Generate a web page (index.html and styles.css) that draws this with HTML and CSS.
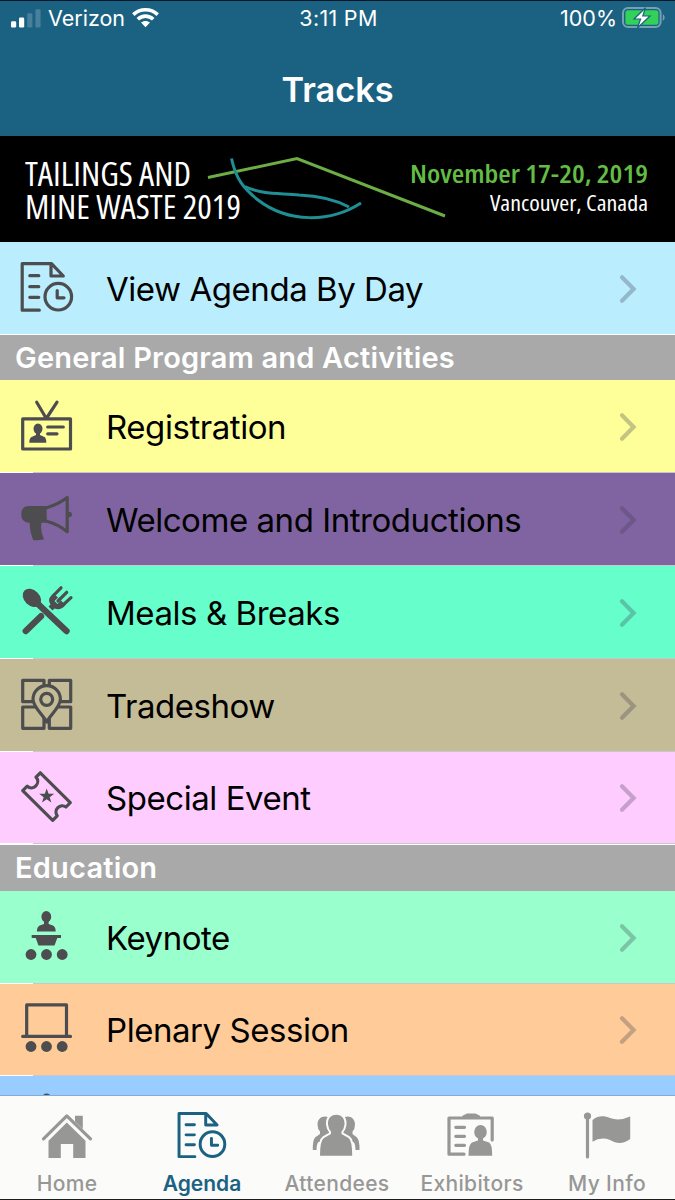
FILE: index.html
```html
<!DOCTYPE html>
<html lang="en">
<head>
  <meta charset="UTF-8">
  <meta name="viewport" content="width=device-width, initial-scale=1.0">
  <title>Tracks</title>
  <link rel="stylesheet" href="styles.css">
</head>
<body>
  <svg class="defs" width="0" height="0">
    <symbol id="agenda" viewBox="0 0 54 54">
      <path class="line" d="M19.3 48.2H2.2V1.6H31.5L43.3 14H31V1.6M9.8 13.7H18.8M9.8 24.7H18.8M9.8 35.3H18.8M37.2 28.5V35.8H44"/>
      <circle class="line" cx="38.3" cy="34.7" r="13.3"/>
    </symbol>
    <symbol id="chevron" viewBox="0 0 20 30">
      <path d="M4 3.2L15.6 15L4 26.8"/>
    </symbol>
  </svg>

  <header>
    <div class="status-bar">
      <div class="carrier">
        <svg width="30" height="19" viewBox="0 0 30 19">
          <rect x="0" y="12.3" width="5.2" height="6.2" rx="1.3"/>
          <rect x="8" y="8.4" width="5.2" height="10.1" rx="1.3"/>
          <rect class="dim" x="16.2" y="4.2" width="5.2" height="14.3" rx="1.3"/>
          <rect class="dim" x="24.4" y="0.3" width="5.2" height="18.2" rx="1.3"/>
        </svg>
        <span>Verizon</span>
        <svg class="wifi" width="27" height="20" viewBox="0 0 27 20">
          <path d="M1.3 6.6C8.2 0.2 18.8 0.2 25.7 6.6"/>
          <path d="M5.8 11.2C10.2 7.1 16.8 7.1 21.2 11.2"/>
          <path class="dot" d="M9 14.6C11.5 12.3 15.5 12.3 18 14.6L13.5 19.2Z"/>
        </svg>
      </div>
      <div class="time">3:11 PM</div>
      <div class="battery">
        <span>100%</span>
        <svg width="44" height="22" viewBox="0 0 44 22">
          <rect class="case" x="1" y="1" width="37.6" height="19" rx="5"/>
          <path class="cap" d="M40.8 7.2C43.2 8.2 43.2 12.8 40.8 13.8Z"/>
          <rect class="charge" x="3.4" y="3.2" width="33" height="14.6" rx="2.5"/>
          <path class="bolt" d="M23.500 0.800L12 12H18.600L15.400 21L28 9H20.800Z"/>
        </svg>
      </div>
    </div>
    <h1>Tracks</h1>
  </header>

  <svg class="banner" viewBox="0 0 675 106">
    <path class="hill" d="M208 41.5L297 22.5L445 80"/>
    <path class="pond" d="M231.5 22.5C236 43 243 52 258 64C288 87 330 87 361 67"/>
    <path class="pond" d="M245 50.5C262 59 280 57 299 59C322 60 336 64 349 71"/>
    <text class="name" x="25" y="49.5" textLength="166" lengthAdjust="spacingAndGlyphs">TAILINGS AND</text>
    <text class="name" x="25" y="82.5" textLength="216" lengthAdjust="spacingAndGlyphs">MINE WASTE 2019</text>
    <text class="date" x="410" y="46.5" textLength="238" lengthAdjust="spacingAndGlyphs">November 17-20, 2019</text>
    <text class="place" x="490" y="75" textLength="158" lengthAdjust="spacingAndGlyphs">Vancouver, Canada</text>
  </svg>

  <main>
    <a class="row sky by-day">
      <svg class="icon"><use href="#agenda"/></svg>
      <span>View Agenda By Day</span>
      <svg class="chevron"><use href="#chevron"/></svg>
    </a>

    <h2>General Program and Activities</h2>
    <a class="row yellow">
      <svg class="icon" viewBox="0 0 54 54">
        <path class="line" d="M2.7 18.9H50.5V49H2.7ZM16.7 2.2L26.3 18.5L37 2.2M27.7 27H43.3M27.7 33.8H37"/>
        <ellipse cx="18" cy="28.8" rx="4.5" ry="5.2"/>
        <path d="M16 32H20V35L24.5 37Q26.3 38 26.3 42.7H9.3Q9.3 38 11.5 37L16 35Z"/>
      </svg>
      <span>Registration</span>
      <svg class="chevron"><use href="#chevron"/></svg>
    </a>
    <a class="row purple">
      <svg class="icon" viewBox="0 0 54 54">
        <path d="M8 13H26.7V29.7H21.5Q20 38 24 46.3Q19 47.8 13.3 47.2Q10 40 9.6 29.7H8Q1.3 29 1.3 21.3Q1.3 13.5 8 13Z"/>
        <path class="line" d="M26.7 14.7Q38 11.5 47.2 4.5V38.8Q38 31 26.7 28.2"/>
        <circle cx="49.3" cy="21.4" r="2.6"/>
      </svg>
      <span>Welcome and Introductions</span>
      <svg class="chevron"><use href="#chevron"/></svg>
    </a>
    <a class="row mint">
      <svg class="icon" viewBox="0 0 54 54">
        <ellipse cx="11.9" cy="11.9" rx="10.5" ry="7.7" transform="rotate(45 11.9 11.9)"/>
        <path class="thick" d="M18 18L46.5 45M5.8 45L21 30.2"/>
        <path class="tine" d="M41 1.8L33 10M46.7 6.3L38 15M51 11.6L42.5 19.5"/>
        <path d="M33.5 7.5L30.5 10.5Q27.5 14 30.5 18.5L28.5 20.5L32.5 24.5L34.5 22.5Q39.500 24.500 43 21.500L45.500 19L41 14.500L37.500 18L34.500 15L38 11.500Z"/>
      </svg>
      <span>Meals &amp; Breaks</span>
      <svg class="chevron"><use href="#chevron"/></svg>
    </a>
    <a class="row tan">
      <svg class="icon" viewBox="0 0 54 54">
        <path class="line" d="M2.7 1.3H24V22.7H2.7ZM29.3 1.3H50.7V22.7H29.3ZM2.7 28H24V49.3H2.7ZM29.3 28H50.7V49.3H29.3Z"/>
        <path class="line pin" d="M26.7 43C23 36 13 28 13 20.3A13.7 13.7 0 0 1 40.4 20.3C40.4 28 30.4 36 26.7 43Z"/>
        <circle class="line" cx="26.7" cy="20.3" r="6"/>
      </svg>
      <span>Tradeshow</span>
      <svg class="chevron"><use href="#chevron"/></svg>
    </a>
    <a class="row pink">
      <svg class="icon" viewBox="0 0 54 54">
        <path class="line" d="M20.3 1.8L50.3 31.6L46 36A6.3 6.3 0 0 0 37.2 44.8L32.7 49.3L2.7 19.6L7.2 15.2A6.3 6.3 0 0 0 16 6.2Z"/>
        <path d="M26.7 17.5L28.6 22.8H34.2L29.7 26.2L31.4 31.6L26.7 28.3L22 31.6L23.7 26.2L19.2 22.8H24.8Z"/>
      </svg>
      <span>Special Event</span>
      <svg class="chevron"><use href="#chevron"/></svg>
    </a>

    <h2>Education</h2>
    <a class="row green">
      <svg class="icon" viewBox="0 0 54 54">
        <ellipse cx="26.3" cy="5.8" rx="4.9" ry="5.7"/>
        <path d="M24 10H28.6V13L33 14.5Q35.7 16 35.7 20.5H16.9Q16.9 16 19.6 14.5L24 13ZM11.7 24H41V26.9H37.3L34.5 34.5H18.5L15.7 26.9H11.7Z"/>
        <circle cx="11" cy="43.5" r="5.4"/>
        <circle cx="26.5" cy="43.5" r="5.4"/>
        <circle cx="42.2" cy="43.5" r="5.4"/>
      </svg>
      <span>Keynote</span>
      <svg class="chevron"><use href="#chevron"/></svg>
    </a>
    <a class="row orange">
      <svg class="icon" viewBox="0 0 54 54">
        <path class="line" d="M6.7 33V1.9H46.5V33M2.7 33.4H50.5"/>
        <circle cx="11" cy="43.5" r="5.4"/>
        <circle cx="26.5" cy="43.5" r="5.4"/>
        <circle cx="42.2" cy="43.5" r="5.4"/>
      </svg>
      <span>Plenary Session</span>
      <svg class="chevron"><use href="#chevron"/></svg>
    </a>
    <a class="row blue">
      <svg class="icon" viewBox="0 0 54 54">
        <circle cx="26.6" cy="2" r="4.5"/>
      </svg>
    </a>
  </main>

  <nav>
    <a>
      <svg viewBox="0 0 54 48">
        <path class="line" d="M3.5 26.8L26.8 3.9L50.5 26.8"/>
        <path d="M35 3.7H42.8V17L35 9.5ZM26.8 10.5L45.5 28.7V46H33.2V32H20.8V46H8.5V28.7Z"/>
      </svg>
      <span>Home</span>
    </a>
    <a class="active">
      <svg class="agenda-tab"><use href="#agenda"/></svg>
      <span>Agenda</span>
    </a>
    <a>
      <svg viewBox="0 0 54 48">
        <path d="M15 4.500C19.500 4.500 22 8 22 13V30H8.500Q6.500 32 6.500 38H2.800Q2.500 29 5 25.500L10 22V19.500Q7.500 17 7.500 12.500C7.500 8 10.500 4.500 15 4.500Z"/>
        <path d="M37.500 4.500C33 4.500 30.500 8 30.500 13V30H43.500Q45.500 32 45.500 38H49.500Q49.800 29 47 25.500L42.500 22V19.500Q45 17 45 12.500C45 8 42 4.500 37.500 4.500Z"/>
        <path class="front" d="M26.3 2.7C32 2.7 35 7 34.5 12.5Q34 17 31.5 19.500V22L38.500 26Q42.200 28.500 42.200 43.7H10Q10 28.500 14 26L21 22V19.500Q18.500 17 18 12.500C17.500 7 20.5 2.7 26.3 2.7Z"/>
      </svg>
      <span>Attendees</span>
    </a>
    <a>
      <svg viewBox="0 0 54 48">
        <path class="line" d="M19 42.2H4V6H47.2V28M10.8 15.3H19.5M10.8 24.3H19.5M10.8 33.3H19.5"/>
        <path d="M17.2 6.9V5Q17.2 3 19.5 2.800L22 1.6H30.5L33 2.800Q35.2 3 35.2 5V6.9Z"/>
        <ellipse cx="35.5" cy="20" rx="6.3" ry="7"/>
        <path d="M33 25H38V28.5L44 30.5Q47.2 32 47.2 43.7H23.5Q23.5 32 27 30.5L33 28.5Z"/>
      </svg>
      <span>Exhibitors</span>
    </a>
    <a>
      <svg viewBox="0 0 54 48">
        <circle cx="7.5" cy="4" r="3.6"/>
        <path class="line" d="M7.5 4V45"/>
        <path d="M12.5 8C18 3.5 24 3.5 30 6Q39 9.5 50.2 4.5V27C43 32.5 37 32 30 28Q21 24.5 12.5 29.7Z"/>
      </svg>
      <span>My Info</span>
    </a>
  </nav>
</body>
</html>
```
FILE: styles.css
```css
body {
  margin: 0;
  width: 675px;
  height: 1200px;
  overflow: hidden;
  display: flex;
  flex-direction: column;
  font-family: Inter, sans-serif;
  color: #000;
}

.defs {
  position: absolute;
}

header {
  box-sizing: border-box;
  height: 136px;
  flex: none;
  background-color: #1b6282;
  border-top: 1px solid #06172b;
  color: #fff;
}

.status-bar {
  display: grid;
  grid-template-columns: 1fr auto 1fr;
  align-items: center;
  height: 34px;
  padding: 0 9px 0 11px;
  font-size: 21.5px;
}

.carrier, .battery {
  display: flex;
  align-items: center;
  gap: 8px;
}

.carrier {
  gap: 7px;
}

.time {
  letter-spacing: 0.3px;
}

.battery {
  justify-content: flex-end;
  gap: 5px;
}

.status-bar svg {
  fill: #fff;
}

.status-bar .dim {
  fill: #487f9a;
}

.wifi path {
  fill: none;
  stroke: #fff;
  stroke-width: 3.6;
}

.wifi .dot {
  fill: #fff;
  stroke: none;
}

.battery .case {
  fill: none;
  stroke: #76a1b4;
  stroke-width: 2;
}

.battery .cap {
  fill: #76a1b4;
}

.battery .charge {
  fill: #32d158;
}

.battery .bolt {
  stroke: #1b6282;
  stroke-width: 1.2;
}

h1 {
  margin: 0;
  text-align: center;
  font-size: 34.3px;
  font-weight: 600;
  line-height: 110px;
}

.banner {
  display: block;
  width: 675px;
  height: 106px;
  flex: none;
  background-color: #000;
  font-family: "Open Sans", sans-serif;
}

.hill, .pond {
  fill: none;
  stroke: #6cae45;
  stroke-width: 3;
}

.pond {
  stroke: #1f8f95;
}

.name {
  fill: #fff;
  font-size: 33px;
  font-stretch: 75%;
}

.date {
  fill: #63bd45;
  font-size: 26px;
  font-weight: 600;
  font-stretch: 75%;
}

.place {
  fill: #fff;
  font-size: 22.5px;
  font-weight: 500;
  font-stretch: 75%;
}

main {
  flex: 1;
  min-height: 0;
  overflow: hidden;
}

h2 {
  box-sizing: border-box;
  height: 46.4px;
  margin: 0;
  padding-left: 15px;
  border-top: 1px solid #fff;
  background-color: #a9a9a9;
  color: #fff;
  font-size: 29px;
  font-weight: 600;
  letter-spacing: 0.2px;
  line-height: 46px;
}

.row {
  box-sizing: border-box;
  display: flex;
  align-items: center;
  height: 92.8px;
  padding: 1px 37px 0 20px;
  font-size: 33px;
  letter-spacing: -0.45px;
  /* separator starts after a short white inset */
  background: linear-gradient(to right, #fff 33px, #c8c7cc 33px) bottom / 100% 1px no-repeat var(--row-color);
}

.by-day {
  height: 92px;
  background: var(--row-color);
}

.row span {
  flex: 1;
  margin-left: 32px;
}

.sky { --row-color: #baeeff; }
.yellow { --row-color: #ffff99; }
.purple { --row-color: #8064a1; }
.mint { --row-color: #66ffcc; }
.tan { --row-color: #c4bc96; }
.pink { --row-color: #ffccff; }
.green { --row-color: #99ffcc; }
.orange { --row-color: #ffcc99; }
.blue { --row-color: #99ccff; }

.icon {
  width: 54px;
  height: 54px;
  overflow: visible;
  fill: #4d4d4f;
  stroke: #4d4d4f;
  stroke-width: 0;
}

.line {
  fill: none;
  stroke-width: 3.2;
  stroke-linecap: round;
  stroke-linejoin: round;
}

.pin {
  fill: var(--row-color);
}

.thick {
  stroke-width: 6.4;
  stroke-linecap: round;
}

.tine {
  stroke-width: 3.2;
  stroke-linecap: round;
}

.chevron {
  width: 20px;
  height: 30px;
  fill: none;
  stroke: rgba(60, 60, 80, 0.3);
  stroke-width: 4.2;
  stroke-linecap: round;
}

nav {
  box-sizing: border-box;
  display: flex;
  flex: none;
  height: 105px;
  background-color: #fbfbfa;
  border-top: 1px solid #86acd3;
  border-bottom: 1px solid #1a1c20;
}

nav a {
  flex: 1;
  display: flex;
  flex-direction: column;
  align-items: center;
  padding: 16px 1px 0 0;
  color: #979796;
  font-size: 21px;
  font-weight: 500;
  letter-spacing: 0.35px;
}

nav svg {
  width: 54px;
  height: 48px;
  fill: currentColor;
  stroke: currentColor;
  stroke-width: 0;
}

nav .agenda-tab {
  width: 50px;
  height: 50px;
  margin: 0 1px -2px 0;
}

.front {
  stroke: #fbfbfa;
  stroke-width: 4;
  paint-order: stroke;
}

nav span {
  margin-top: 10.5px;
}

nav .active {
  color: #1b6282;
  font-weight: 600;
  letter-spacing: 0;
}
```
